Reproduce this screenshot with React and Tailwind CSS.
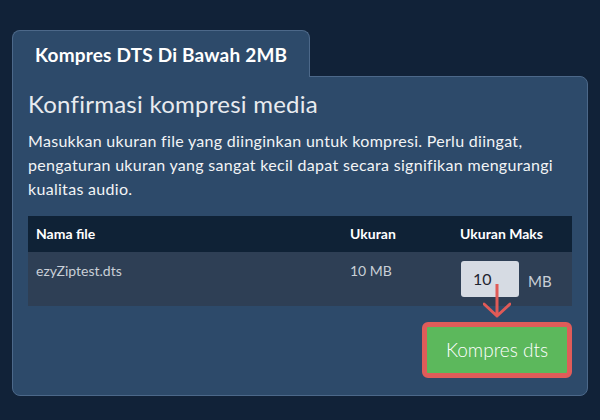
function App() {
  return (
    <div
      className="min-h-[420px] w-[600px] bg-[#112238] px-3 pt-[30px] text-white"
      style={{ fontFamily: 'Lato, "Open Sans", sans-serif' }}
    >
      <div className="relative z-10 -mb-px inline-flex h-[47px] items-center rounded-t-lg border border-b-0 border-[#4c6889] bg-[#2d4a6a] px-[22px] pt-[3px]">
        <h2 className="text-[19px] font-bold tracking-[0.2px] text-white">Kompres DTS Di Bawah 2MB</h2>
      </div>

      <div className="rounded-tr-lg rounded-b-lg border border-[#4c6889] bg-[#2d4a6a] px-[15px] pt-[13px] pb-[17px]">
        <h1 className="text-[24px] leading-[1.2] font-normal tracking-[0.25px] text-[#e8ebef]">Konfirmasi kompresi media</h1>
        <p className="mt-[10px] text-[16px] leading-6 tracking-[0.3px] text-[#f2f4f6]">
          Masukkan ukuran file yang diinginkan untuk kompresi. Perlu diingat, pengaturan ukuran yang sangat kecil dapat secara signifikan mengurangi kualitas audio.
        </p>

        <div className="mt-[15px] text-[14px]">
          <div className="grid h-[36px] grid-cols-[314px_110px_1fr] items-center bg-[#0f2236] font-bold text-white">
            <div className="px-2">Nama file</div>
            <div className="px-2">Ukuran</div>
            <div className="px-2">Ukuran Maks</div>
          </div>
          <div className="grid h-[54px] grid-cols-[314px_110px_1fr] bg-[#2e3f55] text-[#c9cfd7]">
            <div className="px-2 pt-2">ezyZiptest.dts</div>
            <div className="px-2 pt-2">10 MB</div>
            <div className="relative flex items-start gap-[9px] pt-[9px] pl-[9px]">
              <div className="flex h-[36px] w-[58px] items-center rounded-[3px] bg-[#d6dbe3] pl-3 text-[16px] text-[#1e2530]">10</div>
              <span className="mt-[9px] text-[15px]">MB</span>
              <svg className="absolute top-[32px] left-[31px]" width="28" height="34" viewBox="0 0 28 34" fill="none">
                <path d="M14 0 V32 M1 20 L14 32 L27 20" stroke="#e05a57" strokeWidth="3" strokeLinecap="round" strokeLinejoin="round" />
              </svg>
            </div>
          </div>
        </div>

        <div className="mt-4 flex justify-end">
          <button className="h-[56px] w-[150px] rounded-md border-[5px] border-[#e05c59] bg-[#5cb85c] text-[19px] font-light text-white">
            Kompres dts
          </button>
        </div>
      </div>
    </div>
  );
}

export default App;
